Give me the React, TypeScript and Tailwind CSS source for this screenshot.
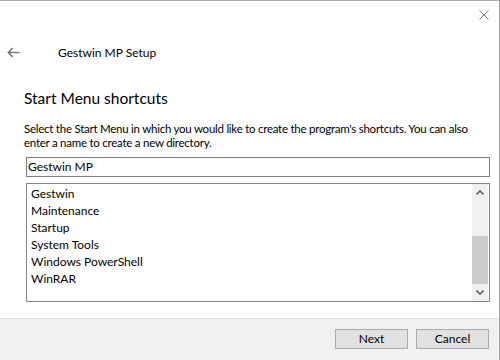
import React from 'react';

const items = ['Gestwin', 'Maintenance', 'Startup', 'System Tools', 'Windows PowerShell', 'WinRAR'];

const Chevron = ({ up }: { up?: boolean }) => (
  <svg width="8" height="5" viewBox="0 0 8 5" className="block">
    <path
      d={up ? 'M0.5 4.5 L4 1 L7.5 4.5' : 'M0.5 0.5 L4 4 L7.5 0.5'}
      fill="none"
      stroke="#606060"
      strokeWidth="1.6"
    />
  </svg>
);

const ListBox: React.FC = () => (
  <div className="mt-[6px] ml-[2px] h-[119px] border border-[#828790] flex bg-white">
    <div className="flex-1 pt-[1px] pl-[4px]">
      {items.map((item) => (
        <div key={item} className="h-[17px] leading-[17px] text-[12px] text-black">
          {item}
        </div>
      ))}
    </div>
    <div className="w-[16px] mr-[1px] bg-[#f0f0f0] flex flex-col">
      <div className="h-[17px] flex items-center justify-center">
        <Chevron up />
      </div>
      <div className="h-[35px]" />
      <div className="h-[48px] bg-[#cdcdcd]" />
      <div className="flex-1 flex items-center justify-center">
        <Chevron />
      </div>
    </div>
  </div>
);

const Button = ({ text }: { text: string }) => (
  <button className="w-[73px] h-[20px] bg-[#e1e1e1] border border-[#adadad] text-[12px] text-black leading-[18px]">
    {text}
  </button>
);

export default function App() {
  return (
    <div
      className="w-[500px] h-[360px] flex flex-col bg-white border-t border-r border-[#aaaaaa] overflow-hidden"
      style={{ fontFamily: 'Lato, "Noto Sans", sans-serif' }}
    >
      <div className="h-[40px] flex justify-end pt-[9px] pr-[10px]">
        <svg width="10" height="10" viewBox="0 0 10 10">
          <path d="M0.5 0.5 L9.5 9.5 M9.5 0.5 L0.5 9.5" stroke="#7a7a7a" strokeWidth="1" fill="none" />
        </svg>
      </div>
      <div className="h-[24px] flex items-center">
        <svg width="13" height="11" viewBox="0 0 13 11" className="ml-[7px] -mt-[1px]">
          <path d="M12.5 5.5 H1.5 M5.8 1 L1.3 5.5 L5.8 10" stroke="#7a7a7a" strokeWidth="1.6" fill="none" />
        </svg>
        <span className="ml-[38px] text-[12px] text-black">Gestwin MP Setup</span>
      </div>
      <div className="pl-[24px] pr-[9px] flex flex-col">
        <h1 className="mt-[23px] h-[20px] leading-[20px] text-[15.5px] text-black">Start Menu shortcuts</h1>
        <p className="mt-[14px] text-[11.5px] tracking-[-0.25px] leading-[14px] text-black">
          Select the Start Menu in which you would like to create the program's shortcuts. You can also
          <br />
          enter a name to create a new directory.
        </p>
        <div className="mt-[7px] ml-[2px] h-[20px] border border-[#7a7a7a] px-[1px] text-[12px] leading-[18px] text-black">
          Gestwin MP
        </div>
        <ListBox />
      </div>
      <div className="mt-auto h-[42px] border-t border-[#dfdfdf] bg-[#f0f0f0] flex justify-end items-start pt-[10px] pr-[10px] gap-[8px]">
        <Button text="Next" />
        <Button text="Cancel" />
      </div>
    </div>
  );
}
